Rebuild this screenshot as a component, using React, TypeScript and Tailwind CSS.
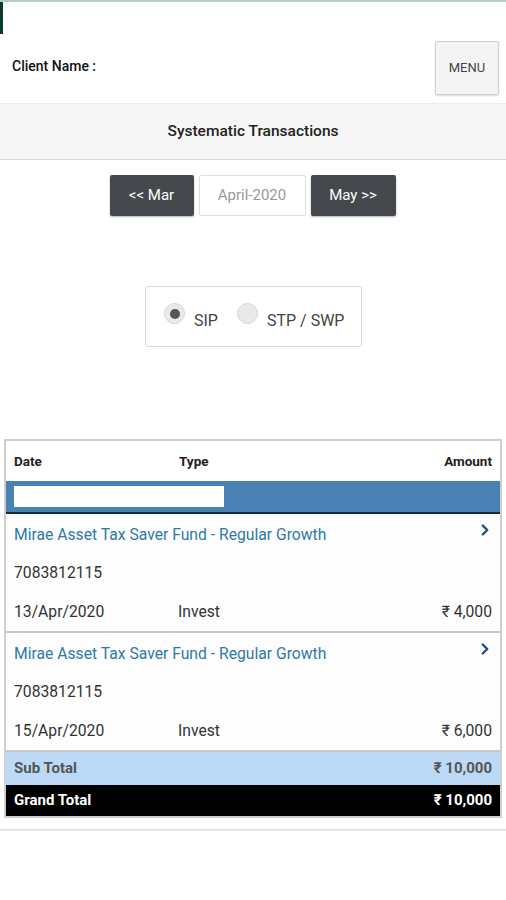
import React, { useState } from 'react';
import { ChevronRight } from 'lucide-react';

interface Txn {
  scheme: string;
  folio: string;
  date: string;
  type: string;
  amount: string;
}

const txns: Txn[] = [
  { scheme: 'Mirae Asset Tax Saver Fund - Regular Growth', folio: '7083812115', date: '13/Apr/2020', type: 'Invest', amount: '₹ 4,000' },
  { scheme: 'Mirae Asset Tax Saver Fund - Regular Growth', folio: '7083812115', date: '15/Apr/2020', type: 'Invest', amount: '₹ 6,000' },
];

const Radio = ({ checked, label, onClick }: { checked: boolean; label: string; onClick: () => void }) => (
  <button onClick={onClick} className="flex items-start gap-[9px]">
    <span className="mt-[6px] w-[21px] h-[21px] rounded-full bg-[#e9e9e9] border border-[#d6d6d6] flex items-center justify-center">
      {checked && <span className="w-[10px] h-[10px] rounded-full bg-[#555]" />}
    </span>
    <span className="mt-[12px] text-[16px] text-[#444]">{label}</span>
  </button>
);

const App: React.FC = () => {
  const [mode, setMode] = useState<'sip' | 'stp'>('sip');

  return (
    <div className="min-h-[900px] bg-white font-['Roboto',sans-serif] text-[#222]">
      {/* top strip */}
      <div className="h-[2px] bg-[#b5cfc4]" />
      <div className="relative">
        <div className="absolute left-0 top-0 w-[3px] h-[32px] bg-[#0c3b2a]" />
      </div>

      {/* client row */}
      <div className="flex items-start justify-between pl-3 pr-[7px] pt-[39px] h-[101px]">
        <span className="mt-[15px] text-[14px] font-medium text-[#111]">Client Name :</span>
        <button className="w-[64px] h-[54px] bg-[#f4f4f4] border border-[#cfcfcf] rounded-[2px] shadow-[0_1px_2px_rgba(0,0,0,0.15)] text-[13px] text-[#444]">
          MENU
        </button>
      </div>

      {/* title band */}
      <div className="h-[57px] bg-[#f6f6f6] border-t border-[#ededed] border-b border-b-[#d9d9d9] flex items-center justify-center">
        <span className="text-[15.5px] font-medium text-[#222]">Systematic Transactions</span>
      </div>

      {/* month nav */}
      <div className="flex justify-center gap-[5px] pt-[15px] pr-[1px]">
        <button className="w-[84px] h-[41px] bg-[#45494e] text-white text-[15px] rounded-[2px] shadow-[0_1px_2px_rgba(0,0,0,0.3)]">
          &lt;&lt; Mar
        </button>
        <div className="w-[107px] h-[41px] border border-[#ddd] rounded-[2px] flex items-center justify-center text-[15px] text-[#999]">
          April-2020
        </div>
        <button className="w-[85px] h-[41px] bg-[#45494e] text-white text-[15px] rounded-[2px] shadow-[0_1px_2px_rgba(0,0,0,0.3)]">
          May &gt;&gt;
        </button>
      </div>

      {/* sip / stp toggle */}
      <div className="flex justify-center pt-[70px] pl-[1px]">
        <div className="w-[217px] h-[61px] border border-[#d8d8d8] rounded-[3px] flex items-start gap-[19px] pl-[18px] pt-[10px]">
          <Radio checked={mode === 'sip'} label="SIP" onClick={() => setMode('sip')} />
          <Radio checked={mode === 'stp'} label="STP / SWP" onClick={() => setMode('stp')} />
        </div>
      </div>

      {/* table */}
      <div className="mx-[4px] mt-[92px] border-2 border-[#cfcfcf] border-b-0">
        <div className="h-[40px] flex items-center px-[8px] text-[13.5px] font-bold text-[#222]">
          <span className="w-[165px]">Date</span>
          <span className="flex-1">Type</span>
          <span>Amount</span>
        </div>
        <div className="h-[33px] bg-[#4a81b5] border-b-2 border-[#1b2a3a] flex items-center px-[8px]">
          <input className="w-[210px] h-[21px] bg-white outline-none" />
        </div>
        {txns.map((t, i) => (
          <div key={i} className="border-b-2 border-[#c8c8c8] bg-[#fdfdfd] px-[8px] text-[15.7px]">
            <div className="h-[39px] flex items-center justify-between pt-[2px]">
              <span className="text-[#2e79a8]">{t.scheme}</span>
              <ChevronRight size={18} strokeWidth={3.2} className="text-[#1f4f7a] -mt-[9px] -mr-[2px]" />
            </div>
            <div className="h-[39px] flex items-center text-[#333]">{t.folio}</div>
            <div className="h-[39px] flex items-center text-[#333]">
              <span className="w-[164px]">{t.date}</span>
              <span className="flex-1">{t.type}</span>
              <span>{t.amount}</span>
            </div>
          </div>
        ))}
        <div className="h-[33px] bg-[#bcdaf5] flex items-center justify-between px-[8px] text-[15px] font-bold text-[#555]">
          <span>Sub Total</span>
          <span>₹ 10,000</span>
        </div>
        <div className="h-[33px] bg-black flex items-center justify-between px-[8px] text-[15px] font-bold text-white border-b-2 border-[#cfcfcf]">
          <span>Grand Total</span>
          <span>₹ 10,000</span>
        </div>
      </div>

      <div className="mt-[11px] h-[2px] bg-[#e3e3e3]" />
    </div>
  );
};

export default App;
